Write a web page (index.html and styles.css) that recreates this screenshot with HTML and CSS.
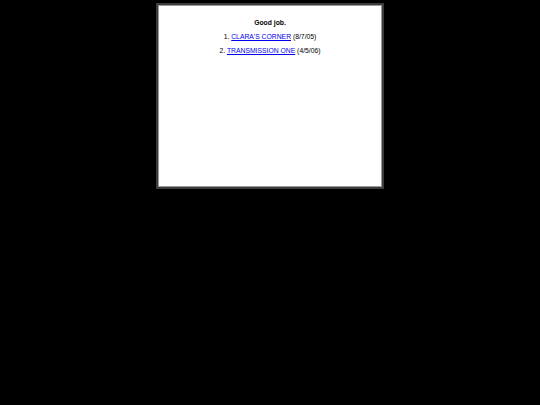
FILE: index.html
```html
<!DOCTYPE html>
<html>
<head>
<meta charset="utf-8">
<link rel="stylesheet" href="styles.css">
</head>
<body>
<div class="frame">
  <p class="title">Good job.</p>
  <p class="item">1. <a href="#">CLARA'S CORNER</a> (8/7/05)</p>
  <p class="item">2. <a href="#">TRANSMISSION ONE</a> (4/5/06)</p>
</div>
</body>
</html>
```
FILE: styles.css
```css
html, body {
  margin: 0;
  padding: 0;
  background: #000;
}
body {
  font-family: "Liberation Sans", Arial, sans-serif;
  font-size: 6.8px;
}
.frame {
  box-sizing: border-box;
  width: 228px;
  height: 186px;
  margin: 3px auto 0;
  background: #fff;
  border: 2px solid #3c3c3c;
  box-shadow: inset 0 0 0 1px #9a9a9a;
  padding-top: 11px;
  text-align: center;
  color: #000;
}
.frame p {
  margin: 0;
  line-height: 14px;
}
.title {
  font-weight: bold;
}
.item a {
  color: #0000ee;
  text-decoration: underline;
}
```
